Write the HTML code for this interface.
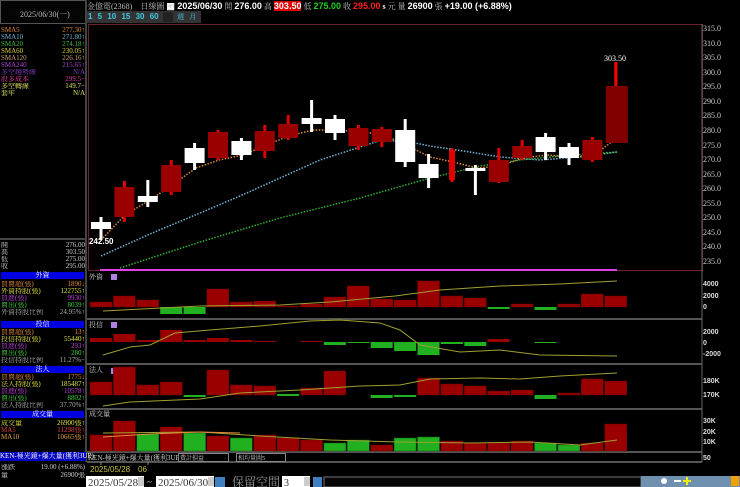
<!DOCTYPE html>
<html><head><meta charset="utf-8"><style>
*{margin:0;padding:0;box-sizing:border-box}
body{width:740px;height:487px;background:#000;overflow:hidden;position:relative;font-family:"Liberation Serif","Noto Serif CJK SC","Noto Sans CJK TC",serif;color:#ccc}
.a{position:absolute;white-space:nowrap}
.s{font-size:7px;line-height:7px}
.s div{height:7px;line-height:7px;overflow:hidden}
.r{text-align:right}
</style></head><body>
<div class="a" style="left:0;top:0;width:86px;height:24px;border:1px solid #555;background:#050505"></div>
<div class="a" style="left:20px;top:9px;font-size:8px;color:#bbb">2025/06/30(一)</div>
<div class="a" style="left:85px;top:0;width:2px;height:462px;background:#444"></div>

<div class="a s" style="left:1px;top:27px;width:84px">
<div style="color:#e08a3c">SMA5<span style="float:right">277.30↑</span></div>
<div style="color:#6fb6d8">SMA10<span style="float:right">271.80↑</span></div>
<div style="color:#3cbf3c">SMA20<span style="float:right">274.18↑</span></div>
<div style="color:#e0d040">SMA60<span style="float:right">230.05↑</span></div>
<div style="color:#c8a070">SMA120<span style="float:right">226.16↑</span></div>
<div style="color:#b040d0">SMA240<span style="float:right">215.65↑</span></div>
<div style="color:#8040c0">多空趨勢線<span style="float:right">N/A</span></div>
<div style="color:#e040a0">股多成本<span style="float:right">299.5−</span></div>
<div style="color:#e0e060">多空轉線<span style="float:right">149.7−</span></div>
<div style="color:#e0e060">套牢<span style="float:right">N/A</span></div>
</div>
<div class="a" style="left:0;top:238px;width:86px;height:2px;background:#444"></div>
<div class="a s" style="left:1px;top:242px;width:84px;color:#ccc">
<div>開<span style="float:right">276.00</span></div><div>高<span style="float:right">303.50</span></div>
<div>低<span style="float:right">275.00</span></div><div>收<span style="float:right">295.00</span></div></div>

<div class="a s" style="left:1px;top:272px;width:83px;height:7px;background:#0000e0;color:#fff;text-align:center">外資</div>
<div class="a s" style="left:1px;top:281px;width:84px">
<div style="color:#e08a3c">買賣超(張)<span style="float:right">1890↓</span></div>
<div style="color:#e0e040">外資持股(張)<span style="float:right">122755↑</span></div>
<div style="color:#c040e0">買進(張)<span style="float:right">9930↑</span></div>
<div style="color:#40d040">賣出(張)<span style="float:right">8039↑</span></div>
<div style="color:#aaa">外資持股比例<span style="float:right">24.95%↑</span></div></div>
<div class="a s" style="left:1px;top:321px;width:83px;height:7px;background:#0000e0;color:#fff;text-align:center">投信</div>
<div class="a s" style="left:1px;top:329px;width:84px">
<div style="color:#e08a3c">買賣超(張)<span style="float:right">13↑</span></div>
<div style="color:#e0e040">投信持股(張)<span style="float:right">55440↑</span></div>
<div style="color:#c040e0">買進(張)<span style="float:right">293↑</span></div>
<div style="color:#40d040">賣出(張)<span style="float:right">280↑</span></div>
<div style="color:#aaa">投信持股比例<span style="float:right">11.27%−</span></div></div>
<div class="a s" style="left:1px;top:366px;width:83px;height:7px;background:#0000e0;color:#fff;text-align:center">法人</div>
<div class="a s" style="left:1px;top:374px;width:84px">
<div style="color:#e08a3c">買賣超(張)<span style="float:right">1775↓</span></div>
<div style="color:#e0e040">法人持股(張)<span style="float:right">185487↑</span></div>
<div style="color:#c040e0">買進(張)<span style="float:right">10578↑</span></div>
<div style="color:#40d040">賣出(張)<span style="float:right">8802↑</span></div>
<div style="color:#aaa">法人持股比例<span style="float:right">37.70%↑</span></div></div>
<div class="a s" style="left:1px;top:411px;width:83px;height:7px;background:#0000e0;color:#fff;text-align:center">成交量</div>
<div class="a s" style="left:1px;top:420px;width:84px">
<div style="color:#e0e040">成交量<span style="float:right">26900張↑</span></div>
<div style="color:#e04040">MA5<span style="float:right">11298張↑</span></div>
<div style="color:#e0a040">MA10<span style="float:right">10665張↑</span></div></div>
<div class="a s" style="left:0;top:452px;width:86px;height:9px;background:#0000c0;color:#fff;padding-top:1px">KEN-極光鏡+爆大量(獲利3UP)</div>
<div class="a s" style="left:1px;top:464px;width:84px;color:#ccc">
<div style="height:8px">漲跌<span style="float:right">19.00 (+6.88%)</span></div><div>量<span style="float:right">26900張</span></div></div>

<div class="a" style="left:87px;top:1px;font-size:8px;line-height:10px;color:#bbb">金億電(2368)&nbsp;&nbsp;&nbsp;&nbsp;日線圖 <b style="font-family:'Liberation Sans',sans-serif;color:#fff;font-size:9px">▦ 2025/06/30</b> 開 <b style="font-family:'Liberation Sans',sans-serif;color:#fff;font-size:9px">276.00</b> 高 <b style="font-family:'Liberation Sans',sans-serif;color:#fff;background:#e00000;font-size:9px">303.50</b> 低 <b style="font-family:'Liberation Sans',sans-serif;color:#20d020;font-size:9px">275.00</b> 收 <b style="font-family:'Liberation Sans',sans-serif;color:#ff2020;font-size:9px">295.00</b> <b style="color:#fff">s</b> 元 量 <b style="font-family:'Liberation Sans',sans-serif;color:#fff;font-size:9px">26900</b> 張 <b style="font-family:'Liberation Sans',sans-serif;color:#fff;font-size:9px">+19.00 (+6.88%)</b></div>
<div class="a" style="left:87px;top:11px;width:114px;height:12px;background:#333"></div>
<div class="a" style="left:88px;top:12px;font-size:8px;line-height:10px;color:#40c8e0;font-family:'Liberation Sans',sans-serif;font-weight:bold;word-spacing:3px">1 5 10 15 30 60</div>
<div class="a" style="left:163px;top:12px;width:10px;height:10px;background:#222"></div>
<div class="a" style="left:177px;top:12px;font-size:7px;color:#40c8e0">週&nbsp;&nbsp;&nbsp;月</div>

<svg class="a" style="left:0;top:0" width="740" height="487" xmlns="http://www.w3.org/2000/svg">
<rect x="88.5" y="24.5" width="614" height="246" fill="none" stroke="#6a2030"/>
<g stroke="#555" stroke-width="2">
<line x1="87" y1="319" x2="702" y2="319"/><line x1="87" y1="364" x2="702" y2="364"/><line x1="87" y1="409" x2="702" y2="409"/><line x1="87" y1="452" x2="702" y2="452"/><line x1="87" y1="462" x2="702" y2="462"/>
</g>
<line x1="702" y1="24" x2="702" y2="462" stroke="#666"/>
<g fill="#ccc" font-size="8" font-family="Liberation Serif,serif">
<text x="703" y="31">315.0</text><text x="703" y="46">310.0</text><text x="703" y="60">305.0</text><text x="703" y="75">300.0</text><text x="703" y="89">295.0</text><text x="703" y="104">290.0</text><text x="703" y="118">285.0</text><text x="703" y="133">280.0</text><text x="703" y="148">275.0</text><text x="703" y="162">270.0</text><text x="703" y="177">265.0</text><text x="703" y="191">260.0</text><text x="703" y="206">255.0</text><text x="703" y="220">250.0</text><text x="703" y="235">245.0</text><text x="703" y="249">240.0</text><text x="703" y="264">235.0</text>
</g>
<g fill="#ddd" font-size="7" font-weight="bold" font-family="Liberation Sans,sans-serif">
<text x="703" y="286">4000</text><text x="703" y="298">2000</text><text x="703" y="309">0</text>
<text x="703" y="334">2000</text><text x="703" y="345">0</text><text x="703" y="356">-2000</text>
<text x="703" y="383">180K</text><text x="703" y="397">170K</text>
<text x="703" y="423">30K</text><text x="703" y="434">20K</text><text x="703" y="444">10K</text><text x="703" y="460">50</text>
</g>
<polyline fill="none" stroke="#6fb6d8" stroke-width="1.5" stroke-dasharray="1.5 1.5" points="101,256 150,234 200,213 240,196 280,178 320,160 360,147 382,140 410,142 430,146 470,152 500,157 540,160 580,157 617,152"/>
<polyline fill="none" stroke="#30b030" stroke-width="1.5" stroke-dasharray="1.5 1.5" points="120,268 200,242 280,218 360,198 430,178 480,166 520,160 560,156 617,152"/>
<polyline fill="none" stroke="#e08a3c" stroke-width="1.5" stroke-dasharray="1.5 1.5" points="101,240 125,215 150,200 172,185 196,168 219,160 243,155 266,145 289,136 313,130 336,130 360,132 382,134 406,145 430,157 453,162 477,168 500,166 523,158 547,155 571,157 594,155 617,138"/>
<line x1="100" y1="270" x2="617" y2="270" stroke="#e040e0" stroke-width="2"/>
<g>
<rect x="99.5" y="217" width="3" height="23" fill="#fff"/><rect x="91" y="222" width="20" height="7" fill="#fff"/>
<rect x="123" y="181" width="3" height="41" fill="#e00000"/><rect x="114.4" y="187" width="20" height="30" fill="#9a0000"/>
<rect x="146.3" y="180" width="3" height="27" fill="#fff"/><rect x="137.8" y="196" width="20" height="6" fill="#fff"/>
<rect x="169.7" y="160" width="3" height="35" fill="#e00000"/><rect x="161.2" y="165" width="20" height="27" fill="#9a0000"/>
<rect x="193.1" y="143" width="3" height="27" fill="#fff"/><rect x="184.6" y="148" width="20" height="15" fill="#fff"/>
<rect x="216.5" y="130" width="3" height="30" fill="#e00000"/><rect x="208" y="132" width="20" height="26" fill="#9a0000"/>
<rect x="239.9" y="138" width="3" height="22" fill="#fff"/><rect x="231.4" y="141" width="20" height="14" fill="#fff"/>
<rect x="263.3" y="125" width="3" height="33" fill="#e00000"/><rect x="254.8" y="131" width="20" height="20" fill="#9a0000"/>
<rect x="286.7" y="115" width="3" height="25" fill="#e00000"/><rect x="278.2" y="124" width="20" height="14" fill="#9a0000"/>
<rect x="310.1" y="100" width="3" height="32" fill="#fff"/><rect x="301.6" y="118" width="20" height="6" fill="#fff"/>
<rect x="333.5" y="115" width="3" height="25" fill="#fff"/><rect x="325" y="119" width="20" height="14" fill="#fff"/>
<rect x="356.9" y="125" width="3" height="25" fill="#e00000"/><rect x="348.4" y="128" width="20" height="18" fill="#9a0000"/>
<rect x="380.3" y="127" width="3" height="20" fill="#e00000"/><rect x="371.8" y="129" width="20" height="13" fill="#9a0000"/>
<rect x="403.7" y="119" width="3" height="48" fill="#fff"/><rect x="395.2" y="130" width="20" height="32" fill="#fff"/>
<rect x="427.1" y="154" width="3" height="34" fill="#fff"/><rect x="418.6" y="164" width="20" height="14" fill="#fff"/>
<rect x="450.5" y="148" width="3" height="34" fill="#e00000"/><rect x="449" y="150" width="6" height="30" fill="#e00000"/>
<rect x="473.9" y="165" width="3" height="30" fill="#fff"/><rect x="465.4" y="168" width="20" height="3" fill="#fff"/>
<rect x="497.3" y="148" width="3" height="35" fill="#e00000"/><rect x="488.8" y="160" width="20" height="22" fill="#9a0000"/>
<rect x="520.7" y="140" width="3" height="20" fill="#e00000"/><rect x="512.2" y="146" width="20" height="12" fill="#9a0000"/>
<rect x="544.1" y="133" width="3" height="27" fill="#fff"/><rect x="535.6" y="137" width="20" height="15" fill="#fff"/>
<rect x="567.5" y="143" width="3" height="22" fill="#fff"/><rect x="559" y="147" width="20" height="11" fill="#fff"/>
<rect x="590.9" y="137" width="3" height="25" fill="#e00000"/><rect x="582.4" y="140" width="20" height="20" fill="#9a0000"/>
<rect x="614.3" y="62" width="3" height="81" fill="#ff0000"/><rect x="605.8" y="86" width="22" height="57" fill="#800000"/>
</g>
<text x="89" y="244" fill="#fff" font-size="8" font-weight="bold" font-family="Liberation Sans,sans-serif">242.50</text>
<text x="604" y="61" fill="#fff" font-size="8" font-family="Liberation Serif,serif">303.50</text>
<g fill="#ccc" font-size="7"><text x="89" y="279">外資</text><text x="89" y="327">投信</text><text x="89" y="372">法人</text><text x="89" y="416">成交量</text></g>
<g fill="#b080e0"><rect x="111" y="274" width="6" height="6"/><rect x="111" y="322" width="6" height="6"/><rect x="111" y="368" width="6" height="6"/></g>
<g fill="#9a0000" stroke="#600" stroke-width=".5">
<rect x="90" y="302" width="22" height="5"/><rect x="113.4" y="296" width="22" height="11"/><rect x="136.8" y="300" width="22" height="7"/>
<rect x="206.9" y="289" width="22" height="18"/><rect x="230.3" y="302" width="22" height="5"/><rect x="253.7" y="301" width="22" height="6"/>
<rect x="277.1" y="306" width="22" height="1"/><rect x="300.5" y="304" width="22" height="3"/><rect x="323.9" y="297" width="22" height="10"/>
<rect x="347.3" y="286" width="22" height="21"/><rect x="370.7" y="299" width="22" height="8"/><rect x="394.1" y="300" width="22" height="7"/>
<rect x="417.5" y="281" width="22" height="26"/><rect x="440.9" y="296" width="22" height="11"/><rect x="464.3" y="298" width="22" height="9"/>
<rect x="511.1" y="304" width="22" height="3"/><rect x="557.9" y="304" width="22" height="3"/><rect x="581.3" y="294" width="22" height="13"/><rect x="604.7" y="296" width="22" height="11"/>
</g>
<g fill="#20b020"><rect x="160.2" y="307" width="22" height="7"/><rect x="183.6" y="307" width="22" height="7"/><rect x="487.7" y="307" width="22" height="2"/><rect x="534.5" y="307" width="22" height="3"/></g>
<polyline fill="none" stroke="#a0a030" points="103,311 200,306 280,305 330,302 395,296 440,290 500,286 560,284 617,281"/>
<g fill="#9a0000"><rect x="90" y="338" width="22" height="4"/><rect x="113.4" y="334" width="22" height="8"/><rect x="136.8" y="340" width="22" height="2"/><rect x="160.2" y="330" width="22" height="12"/><rect x="183.6" y="340" width="22" height="2"/><rect x="206.9" y="338" width="22" height="4"/><rect x="230.3" y="340" width="22" height="2"/><rect x="253.7" y="341" width="22" height="1"/><rect x="300.5" y="341" width="22" height="1"/><rect x="487.7" y="339" width="22" height="3"/></g>
<g fill="#20b020"><rect x="323.9" y="342" width="22" height="3"/><rect x="347.3" y="342" width="22" height="1"/><rect x="370.7" y="342" width="22" height="6"/><rect x="394.1" y="342" width="22" height="9"/><rect x="417.5" y="342" width="22" height="13"/><rect x="440.9" y="342" width="22" height="2"/><rect x="464.3" y="342" width="22" height="4"/><rect x="534.5" y="342" width="22" height="1"/></g>
<polyline fill="none" stroke="#a0a030" points="103,355 130,347 150,345 175,333 210,330 260,326 310,321 340,320 380,323 400,330 420,345 460,352 500,350 540,355 617,356"/>
<g fill="#9a0000" stroke="#600" stroke-width=".5"><rect x="90" y="382" width="22" height="13"/><rect x="113.4" y="367" width="22" height="28"/><rect x="136.8" y="385" width="22" height="10"/><rect x="160.2" y="382" width="22" height="13"/><rect x="206.9" y="370" width="22" height="25"/><rect x="230.3" y="385" width="22" height="10"/><rect x="253.7" y="386" width="22" height="9"/><rect x="300.5" y="388" width="22" height="7"/><rect x="323.9" y="371" width="22" height="24"/><rect x="417.5" y="378" width="22" height="17"/><rect x="440.9" y="384" width="22" height="11"/><rect x="464.3" y="386" width="22" height="9"/><rect x="487.7" y="391" width="22" height="4"/><rect x="511.1" y="390" width="22" height="5"/><rect x="557.9" y="393" width="22" height="2"/><rect x="581.3" y="379" width="22" height="16"/><rect x="604.7" y="381" width="22" height="14"/></g>
<g fill="#20b020"><rect x="183.6" y="395" width="22" height="2"/><rect x="277.1" y="394" width="22" height="2"/><rect x="370.7" y="395" width="22" height="3"/><rect x="394.1" y="395" width="22" height="2"/><rect x="534.5" y="395" width="22" height="4"/></g>
<polyline fill="none" stroke="#a0a030" points="103,406 130,402 200,399 240,393 300,390 360,386 400,385 430,379 480,378 520,379 560,376 617,373"/>
<g fill="#9a0000" stroke="#600" stroke-width=".5"><rect x="90" y="435" width="22" height="16"/><rect x="113.4" y="421" width="22" height="30"/><rect x="160.2" y="427" width="22" height="24"/><rect x="206.9" y="436" width="22" height="15"/><rect x="253.7" y="435" width="22" height="16"/><rect x="277.1" y="438" width="22" height="13"/><rect x="300.5" y="440" width="22" height="11"/><rect x="370.7" y="445" width="22" height="6"/><rect x="440.9" y="441" width="22" height="10"/><rect x="464.3" y="443" width="22" height="8"/><rect x="487.7" y="443" width="22" height="8"/><rect x="511.1" y="441" width="22" height="10"/><rect x="581.3" y="443" width="22" height="8"/><rect x="604.7" y="424" width="22" height="27"/></g>
<g fill="#20b020" stroke="#106010" stroke-width=".5"><rect x="136.8" y="434" width="22" height="17"/><rect x="183.6" y="433" width="22" height="18"/><rect x="230.3" y="438" width="22" height="13"/><rect x="323.9" y="443" width="22" height="8"/><rect x="347.3" y="440" width="22" height="11"/><rect x="394.1" y="438" width="22" height="13"/><rect x="417.5" y="437" width="22" height="14"/><rect x="534.5" y="443" width="22" height="8"/><rect x="557.9" y="445" width="22" height="6"/></g>
<polyline fill="none" stroke="#a0a030" points="103,433 200,432 260,436 330,440 400,442 470,443 530,442 580,445 617,440"/>
<polyline fill="none" stroke="#e08a3c" points="103,437 150,434 200,432 240,433"/>
<g font-size="7" fill="#ccc"><text x="88" y="460">KEN-極光鏡+爆大量(獲利3UP)</text></g>
<rect x="178.5" y="453.5" width="50" height="8" fill="#000" stroke="#888"/><text x="180" y="460" font-size="6" fill="#ccc">費計損益</text><text x="224" y="460" font-size="6" fill="#ccc">·</text>
<rect x="236.5" y="453.5" width="49" height="8" fill="#000" stroke="#888"/><text x="238" y="460" font-size="6" fill="#ccc">相均量圖5</text>
<text x="90" y="472" font-size="8" fill="#c8c040" font-family="Liberation Sans,sans-serif">2025/05/28</text>
<text x="138" y="472" font-size="8" fill="#c8c040" font-family="Liberation Sans,sans-serif">06</text>
<line x1="101" y1="462" x2="101" y2="465" stroke="#888"/><line x1="148" y1="462" x2="148" y2="465" stroke="#888"/>
<rect x="86" y="476" width="58" height="11" fill="#fff"/><text x="88" y="486" font-size="11" fill="#333">2025/05/28</text><rect x="138" y="477" width="6" height="9" fill="#ccc"/>
<text x="147" y="485" font-size="9" fill="#ccc">~</text>
<rect x="156" y="476" width="58" height="11" fill="#fff"/><text x="158" y="486" font-size="11" fill="#333">2025/06/30</text><rect x="208" y="477" width="6" height="9" fill="#ccc"/>
<rect x="215" y="477" width="10" height="10" fill="#4080c0"/>
<text x="232" y="486" font-size="12" fill="#999">保留空間</text>
<rect x="282" y="476" width="28" height="11" fill="#fff"/><text x="284" y="486" font-size="10" fill="#333">3</text><rect x="304" y="477" width="6" height="9" fill="#ccc"/>
<rect x="313" y="477" width="9" height="10" fill="#4080c0"/>
<rect x="324" y="477" width="317" height="10" fill="#050505" stroke="#777"/>
<rect x="641" y="476" width="99" height="11" fill="#7090b0"/>
<g fill="#fff"><circle cx="664" cy="481" r="3"/><rect x="674" y="480" width="7" height="2"/><rect x="686" y="477" width="2" height="8" fill="#ee0"/><rect x="683" y="480" width="8" height="2" fill="#ee0"/></g>
<rect x="731" y="476" width="8" height="10" fill="#f0a000"/>
</svg>
</body></html>
